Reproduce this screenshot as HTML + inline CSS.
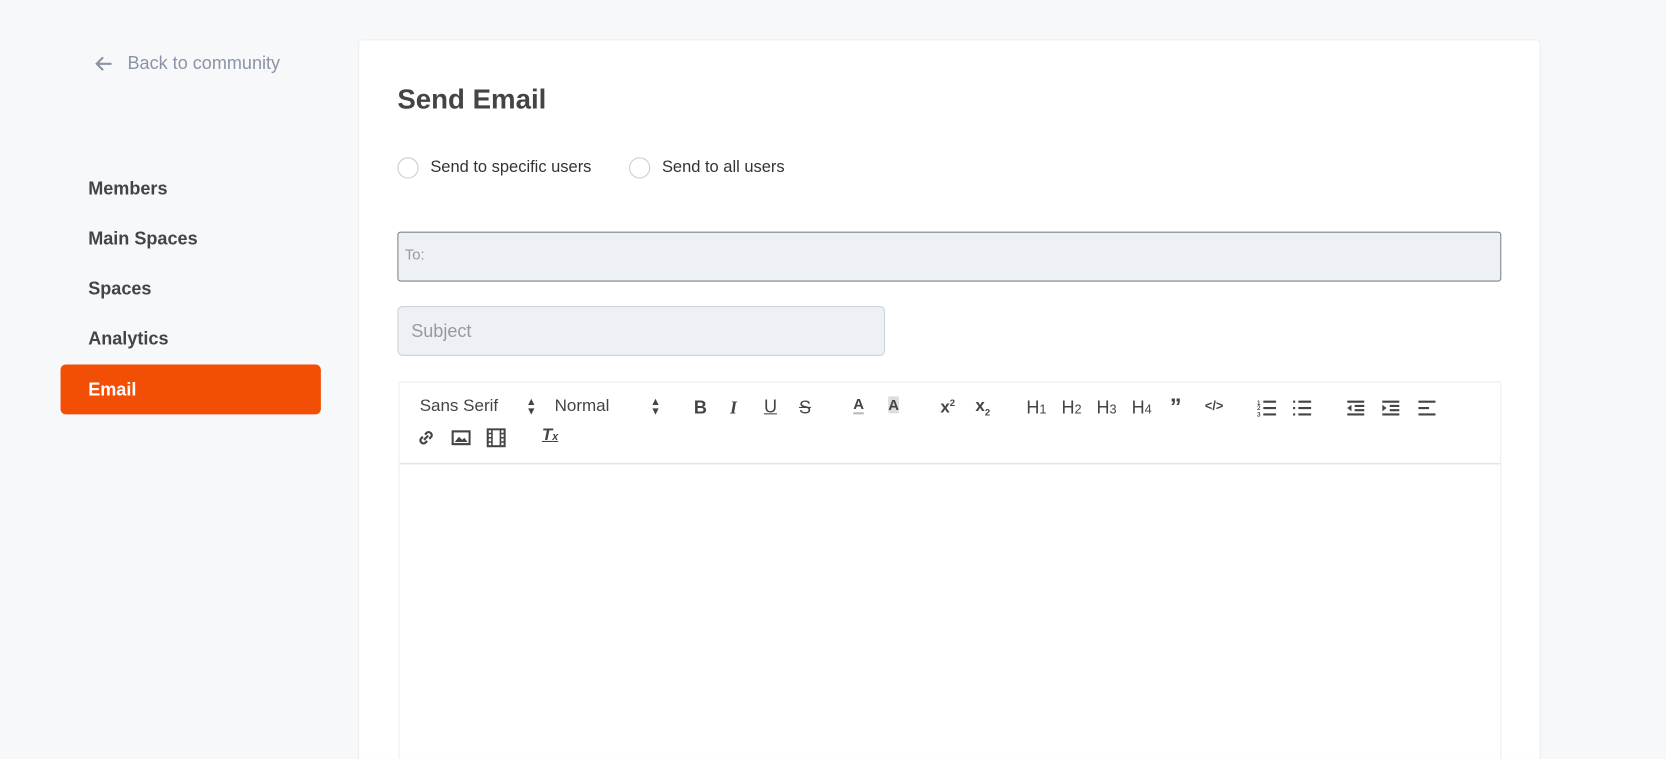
<!DOCTYPE html>
<html><head><meta charset="utf-8"><style>
*{box-sizing:border-box;margin:0;padding:0}
html{width:1666px;height:759px;overflow:hidden}
body{width:1666px;height:759px;overflow:hidden;background:#f7f8fa;font-family:"Liberation Sans",sans-serif;color:#333;position:relative}
#w{position:absolute;left:0;top:0;width:1568px;height:714px;overflow:hidden;transform:scale(1.0625);transform-origin:0 0}
.back{position:absolute;left:88px;top:50px;color:#8a94a6;font-size:17px;display:flex;align-items:center;gap:12px}
.nav{position:absolute;left:57px;width:245px;height:47px;line-height:47px;padding-left:26px;font-weight:bold;font-size:17px;color:#444}
.nav.act{background:#f24e05;color:#fff;border-radius:5px}
.card{position:absolute;left:337px;top:37px;width:1113px;height:700px;background:#fff;border:1px solid #eceef1;border-radius:4px}
h1{position:absolute;left:374px;top:78px;font-size:26px;color:#444;font-weight:bold}
.radio{position:absolute;top:148px;display:flex;align-items:center;gap:11px;font-size:15.5px;color:#333}
.radio i{width:20px;height:20px;border:1px solid #c9cdd3;border-radius:50%;display:inline-block}
.to{position:absolute;left:374px;top:218px;width:1039px;height:47px;background:#edf1f5;border:1px solid #7d838a;border-radius:3px;font-size:14px;color:#999;padding:12px 6px}
.subj{position:absolute;left:374px;top:288px;width:459px;height:47px;background:#edf1f5;border:1px solid #ccd3da;border-radius:5px;font-size:17px;color:#999;padding:13px 12px}
.ed{position:absolute;left:375px;top:359px;width:1038px;height:400px;border:1px solid #ebedef}
.tb{height:77px;border-bottom:1px solid #dcdcdc}
.t{position:absolute;font-size:16px;color:#444}
.b{font-weight:bold}
</style></head><body><div id="w">
<div class="back"><svg width="20" height="20" viewBox="0 0 20 20"><path d="M17 10H3M9 4L3 10l6 6" stroke="#8a94a6" stroke-width="2" fill="none"/></svg>Back to community</div>
<div class="nav" style="top:154px">Members</div>
<div class="nav" style="top:201px">Main Spaces</div>
<div class="nav" style="top:248px">Spaces</div>
<div class="nav" style="top:295px">Analytics</div>
<div class="nav act" style="top:343px">Email</div>
<div class="card"></div>
<h1>Send Email</h1>
<div class="radio" style="left:374px"><i></i>Send to specific users</div>
<div class="radio" style="left:592px"><i></i>Send to all users</div>
<div class="to">To:</div>
<div class="subj">Subject</div>
<div class="ed"><div class="tb"></div></div>
<div class="t" style="left:395px;top:374px">Sans Serif</div>
<div class="t" style="left:495px;top:374px;font-size:10px;line-height:9px">▲<br>▼</div>
<div class="t" style="left:522px;top:374px">Normal</div>
<div class="t" style="left:612px;top:374px;font-size:10px;line-height:9px">▲<br>▼</div>
<div class="t b" style="left:653px;top:374px;font-size:17px">B</div>
<div class="t" style="left:687px;top:374px;font-size:17px;font-style:italic;font-family:'Liberation Serif';font-weight:bold">I</div>
<div class="t" style="left:719px;top:373px;font-size:17px;text-decoration:underline">U</div>
<div class="t" style="left:752px;top:374px;font-size:17px;text-decoration:line-through">S</div>
<div class="t b" style="left:803px;top:372px;font-size:14px;border-bottom:2px solid #bbb">A</div>
<div class="t b" style="left:836px;top:373px;font-size:14px;background:#ddd">A</div>
<div class="t b" style="left:885px;top:374px">x<sup style="font-size:9px">2</sup></div>
<div class="t b" style="left:918px;top:374px">x<sub style="font-size:9px">2</sub></div>
<div class="t" style="left:966px;top:374px;font-size:17px">H<small style="font-size:12px">1</small></div>
<div class="t" style="left:999px;top:374px;font-size:17px">H<small style="font-size:12px">2</small></div>
<div class="t" style="left:1032px;top:374px;font-size:17px">H<small style="font-size:12px">3</small></div>
<div class="t" style="left:1065px;top:374px;font-size:17px">H<small style="font-size:12px">4</small></div>
<div class="t b" style="left:1101px;top:370px;font-size:22px">”</div>
<div class="t b" style="left:1134px;top:375px;font-size:12px">&lt;/&gt;</div>
<svg class="t" style="left:1183px;top:375px" width="20" height="18"><path d="M6 3h12M6 9h12M6 15h12" stroke="#444" stroke-width="2"/><text x="0" y="6" font-size="6">1</text><text x="0" y="11" font-size="6">2</text><text x="0" y="17" font-size="6">3</text></svg>
<svg class="t" style="left:1216px;top:375px" width="20" height="18"><path d="M6 3h12M6 9h12M6 15h12M1 3h2M1 9h2M1 15h2" stroke="#444" stroke-width="2"/></svg>
<svg class="t" style="left:1266px;top:375px" width="20" height="18"><path d="M2 3h16M9 7h9M9 11h9M2 15h16" stroke="#444" stroke-width="2"/><path d="M2 9l4-3v6z" fill="#444"/></svg>
<svg class="t" style="left:1299px;top:375px" width="20" height="18"><path d="M2 3h16M9 7h9M9 11h9M2 15h16" stroke="#444" stroke-width="2"/><path d="M6 9L2 6v6z" fill="#444"/></svg>
<svg class="t" style="left:1333px;top:375px" width="20" height="18"><path d="M2 3h16M2 9h10M2 15h16" stroke="#444" stroke-width="2"/></svg>
<svg class="t" style="left:392px;top:403px" width="18" height="18"><path d="M7 11l4-4M6 8l-2 2a3 3 0 004 4l2-2M12 10l2-2a3 3 0 00-4-4L8 6" stroke="#444" stroke-width="2" fill="none"/></svg>
<svg class="t" style="left:425px;top:404px" width="18" height="16"><rect x="1" y="2" width="16" height="12" fill="none" stroke="#444" stroke-width="2"/><path d="M3 12l4-5 3 3 2-2 3 4z" fill="#444"/></svg>
<svg class="t" style="left:458px;top:403px" width="18" height="18"><rect x="1" y="1" width="16" height="16" fill="none" stroke="#444" stroke-width="2"/><path d="M5 1v16M13 1v16M1 9h4M13 9h4M1 5h4M13 5h4M1 13h4M13 13h4" stroke="#444" stroke-width="1.5"/></svg>
<div class="t b" style="left:510px;top:401px;font-style:italic;font-size:16px;text-decoration:underline">T<small style="font-size:10px">x</small></div>
</div></body></html>
